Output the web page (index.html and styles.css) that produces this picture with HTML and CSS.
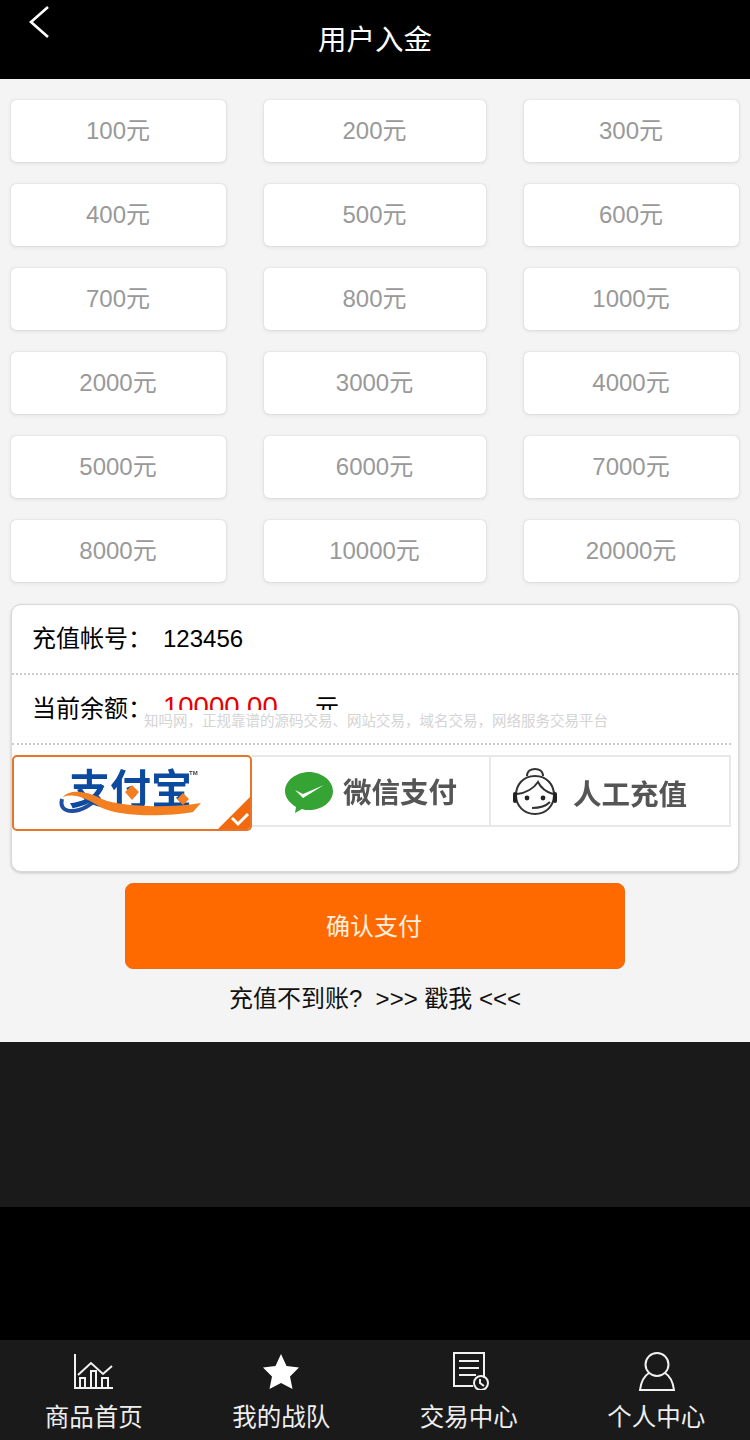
FILE: index.html
```html
<!DOCTYPE html>
<html lang="zh-CN">
<head>
<meta charset="utf-8">
<title>用户入金</title>
<link rel="stylesheet" href="styles.css">
</head>
<body>
<header class="topbar">
  <svg class="back" width="24" height="36" viewBox="0 0 24 36"><path d="M20 2 3 17 20 32" /></svg>
  <h1 class="title">用户入金</h1>
</header>
<main class="main">
  <div class="amounts">
    <div class="amount">100元</div><div class="amount">200元</div><div class="amount">300元</div>
    <div class="amount">400元</div><div class="amount">500元</div><div class="amount">600元</div>
    <div class="amount">700元</div><div class="amount">800元</div><div class="amount">1000元</div>
    <div class="amount">2000元</div><div class="amount">3000元</div><div class="amount">4000元</div>
    <div class="amount">5000元</div><div class="amount">6000元</div><div class="amount">7000元</div>
    <div class="amount">8000元</div><div class="amount">10000元</div><div class="amount">20000元</div>
  </div>
  <section class="card">
    <div class="row row-account"><span class="label">充值帐号：</span><span class="value">123456</span></div>
    <div class="row row-balance">
      <span class="label">当前余额：</span><span class="value money">10000.00</span><span class="value unit">元</span>
      <div class="watermark">知吗网，正规靠谱的源码交易、网站交易，域名交易，网络服务交易平台</div>
    </div>
    <div class="pays">
      <div class="pay pay-active">
        <svg class="logo" width="236" height="72" viewBox="0 0 236 72">
          <path class="swoosh-blue" d="M48 42C46 50 50 54 58 54 68 54 76 48 86 40" />
          <text class="alipay-text" x="55" y="47">支付宝</text>
          <path class="swoosh-orange" d="M49 40C55 33 70 33 86 41 100 49 150 52 187 46L179 55C150 60 105 60 86 50 72 41 60 36 49 40Z" />
          <path class="diamond" d="M118 28 125 35 118 43 111 35ZM169 36 175 42 169 48 163 42Z" />
          <text class="tm" x="175" y="18">TM</text>
        </svg>
        <span class="corner"></span>
        <svg class="tick" width="20" height="16" viewBox="0 0 20 16"><path d="M2 7 8 13 18 3" /></svg>
      </div>
      <div class="pay pay-wechat">
        <svg class="wechat" width="50" height="44" viewBox="0 0 50 44">
          <path class="bubble" d="M25 1C12 1 1 10 1 20 1 27 6 32 12 36L11 42 18 38C20 39 23 39 25 39 38 39 49 31 49 20 49 10 38 1 25 1Z" />
          <path class="bubble-tick" d="M11 19 19 27 40 14 19 23Z" />
        </svg>
        <span class="pay-text">微信支付</span>
      </div>
      <div class="pay pay-service">
        <svg class="face" width="46" height="50" viewBox="0 0 46 50">
          <path class="face-line" d="M23 9C11 9 4 18 4 28 4 39 12 47 23 47 34 47 42 39 42 28 42 18 35 9 23 9Z" />
          <path class="face-line" d="M15 9C15 4 19 2 23 2 27 2 31 4 31 9" />
          <path class="face-line" d="M5 27C14 26 22 21 26 15 29 21 34 25 41 27" />
          <path class="face-line" d="M20 41C27 41 33 40 38 35" />
          <circle class="face-dot" cx="15" cy="31" r="2.4" />
          <circle class="face-dot" cx="31" cy="31" r="2.4" />
          <rect class="face-dot" x="1" y="25" width="4" height="11" rx="2" />
          <rect class="face-dot" x="41" y="25" width="4" height="11" rx="2" />
        </svg>
        <span class="pay-text">人工充值</span>
      </div>
    </div>
  </section>
  <button class="confirm">确认支付</button>
  <p class="help">充值不到账?  &gt;&gt;&gt; 戳我 &lt;&lt;&lt;</p>
</main>
<div class="dark-band"></div>
<nav class="tabs">
  <div class="tab">
    <svg class="tab-icon" width="46" height="38" viewBox="0 -1 46 38"><path d="M4 1V35H42M7 22 20 10 32 21 41 13M9 35V25H14V35M20 35V18H25V35M31 35V25H37V35" /></svg>
    <span class="tab-label">商品首页</span>
  </div>
  <div class="tab">
    <svg class="tab-icon" width="46" height="38" viewBox="0 -1 46 38"><path class="solid" d="M23 1 28.500 13 41 14.500 32 23.500 34.500 36 23 30 11.500 36 14 23.500 5 14.500 17.500 13Z" /></svg>
    <span class="tab-label">我的战队</span>
  </div>
  <div class="tab">
    <svg class="tab-icon" width="46" height="38" viewBox="0 0 46 38"><path d="M27 34H8V1H38V26M13 9H33M13 16H33M13 23H30" /><circle cx="35" cy="31" r="7" /><path d="M34 27V31L38 34" /></svg>
    <span class="tab-label">交易中心</span>
  </div>
  <div class="tab">
    <svg class="tab-icon" width="46" height="40" viewBox="0 0 46 40"><circle cx="24" cy="12.500" r="11.500" /><path d="M16 21C11 24 8 30 7 38H41C40 30 37 24 32 21" /></svg>
    <span class="tab-label">个人中心</span>
  </div>
</nav>
</body>
</html>
```

FILE: styles.css
```css
* { box-sizing: border-box; }
html, body { margin: 0; padding: 0; }
body {
  width: 750px;
  height: 1440px;
  background: #000;
  display: flex;
  flex-direction: column;
  font-family: "Liberation Sans", "Noto Sans CJK SC", sans-serif;
  overflow: hidden;
}
.topbar {
  position: relative;
  height: 79px;
  flex: none;
  background: #000;
  display: flex;
  justify-content: center;
  padding-top: 21px;
}
.back {
  position: absolute;
  left: 28px;
  top: 5px;
  fill: none;
  stroke: #fff;
  stroke-width: 2.6;
}
.title {
  margin: 0;
  font-size: 28.500px;
  line-height: 38px;
  font-weight: 400;
  color: #fff;
}
.main {
  height: 963px;
  flex: none;
  background: #f4f4f4;
  padding-top: 21px;
}
.amounts {
  display: grid;
  grid-template-columns: 215px 222px 215px;
  grid-auto-rows: 62px;
  column-gap: 38px;
  row-gap: 22px;
  padding: 0 11px;
}
.amount {
  background: #fff;
  border-radius: 5px;
  box-shadow: 0 0 1px rgba(0, 0, 0, .25), 0 1px 4px rgba(0, 0, 0, .1);
  display: flex;
  align-items: center;
  justify-content: center;
  padding: 0 1px 6px 0;
  font-size: 24px;
  color: #999;
}
.card {
  position: relative;
  margin: 22px 11px 0;
  height: 268px;
  background: #fff;
  border: 1px solid #d8d8d8;
  border-radius: 10px;
  box-shadow: 0 1px 3px rgba(0, 0, 0, .2);
}
.row {
  position: relative;
  display: flex;
  align-items: center;
  height: 70px;
  padding-left: 20px;
  border-bottom: 2px dotted #ccc;
  font-size: 24px;
  color: #000;
}
.row-balance { margin-right: 7px; }
.label { width: 131px; padding-bottom: 5px; }
.money { width: 152px; padding-bottom: 4px; font-size: 27.500px; color: #e60000; }
.unit { padding-bottom: 8px; }
.watermark {
  position: absolute;
  left: 132px;
  top: 35px;
  width: 470px;
  height: 29px;
  padding-top: 3px;
  background: #fff;
  color: #d4d4d4;
  font-size: 14.500px;
  line-height: 16px;
  white-space: nowrap;
}
.pays {
  display: grid;
  grid-template-columns: 240px 239px 240px;
  align-items: start;
  margin-top: 10px;
}
.pay {
  position: relative;
  height: 72px;
  background: #fff;
  border: 2px solid #e8e8e8;
  border-left-width: 0;
  display: flex;
  align-items: center;
}
.pay-active {
  height: 76px;
  border: 2px solid #e8742a;
  border-radius: 5px;
  overflow: hidden;
  z-index: 1;
}
.logo { position: absolute; left: 0; top: 0; filter: blur(.4px); }
.swoosh-blue { fill: none; stroke: #1f4f9e; stroke-width: 4; }
.swoosh-orange { fill: #f47f20; }
.alipay-text { font-size: 41px; font-weight: 700; fill: #0b4a9e; }
.diamond { fill: #f47f20; }
.tm { font-size: 6px; font-weight: 700; fill: #444; }
.corner {
  position: absolute;
  right: -2px;
  bottom: -2px;
  width: 36px;
  height: 36px;
  background: #f26a10;
  clip-path: polygon(100% 0, 100% 100%, 0 100%);
}
.tick {
  position: absolute;
  right: 0;
  bottom: 2px;
  fill: none;
  stroke: #fff;
  stroke-width: 3;
}
.wechat { margin-left: 32px; margin-top: 4px; }
.bubble { fill: #36a335; }
.bubble-tick { fill: #fff; }
.pay-text {
  margin-left: 9px;
  font-size: 28.500px;
  font-weight: 700;
  color: #555;
  white-space: nowrap;
  filter: blur(.4px);
}
.pay-wechat .pay-text { padding-bottom: 2px; }
.pay-service { border-right-width: 2px; }
.pay-service .pay-text { margin-left: 15px; padding-top: 3px; }
.face { margin-left: 21px; margin-top: 2px; }
.face-line { fill: none; stroke: #333; stroke-width: 2; }
.face-dot { fill: #222; }
.confirm {
  display: block;
  margin: 11px auto 0;
  width: 500px;
  height: 86px;
  padding: 0 2px 4px 0;
  border: 1px solid #ee6a10;
  border-radius: 8px;
  background: #ff6a00;
  color: #fff1e0;
  font-family: inherit;
  font-size: 24px;
}
.help {
  margin: 12px 0 0;
  text-align: center;
  font-size: 24px;
  line-height: 36px;
  color: #111;
  white-space: pre;
}
.dark-band { height: 165px; flex: none; background: #1a1a1a; }
.tabs {
  margin-top: auto;
  height: 100px;
  flex: none;
  background: #1a1a1a;
  display: grid;
  grid-template-columns: repeat(4, 1fr);
}
.tab {
  display: flex;
  flex-direction: column;
  align-items: center;
  height: 100px;
  padding-top: 12px;
  position: relative;
}
.tab-icon { flex: none; fill: none; stroke: #f2f2f2; stroke-width: 2; }
.tab-icon .solid { fill: #fff; stroke: none; }
.tab-label {
  position: absolute;
  top: 61px;
  font-size: 24.500px;
  line-height: 34px;
  color: #eee;
}
```
